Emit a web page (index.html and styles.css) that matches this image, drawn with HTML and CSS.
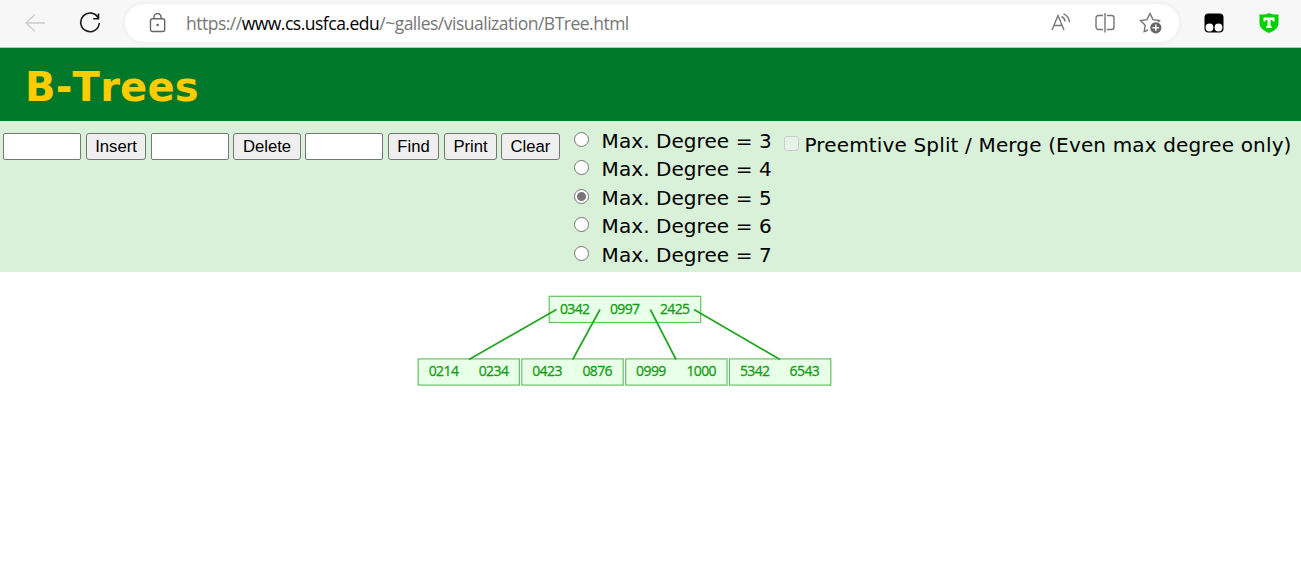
FILE: index.html
```html
<!DOCTYPE html>
<html lang="en">
<head>
<meta charset="utf-8">
<title>B-Tree Visualization</title>
<link rel="stylesheet" href="styles.css">
</head>
<body>
<nav class="toolbar">
  <svg class="back" width="22" height="20" viewBox="0 0 22 20"><path d="M11 1.500 2 10l9 8.500M2 10h19"/></svg>
  <svg class="reload" width="22" height="22" viewBox="0 0 22 22"><path d="M19.400 6.300A9.300 9.300 0 1 0 20.300 11M19.500 1.500v5.300h-5.300"/></svg>
  <div class="address">
    <svg class="lock" width="17" height="20" viewBox="0 0 17 20"><rect x="1.500" y="5.700" width="14.200" height="12.800" rx="2"/><path d="M5 5.700V4a3.500 3.500 0 0 1 7 0v1.700"/><circle class="dot" cx="8.600" cy="12" r="1.300"/></svg>
    <span class="url">https://<b>www.cs.usfca.edu</b>/~galles/visualization/BTree.html</span>
    <span class="tools">
      <svg width="20" height="20" viewBox="0 0 20 20"><path d="M1 17 7 2.500 13 17M3 12.500h8M10.500 3.500a6 6 0 0 1 3.500 5M12.500 .8a10 10 0 0 1 6 8.500"/></svg>
      <svg width="20" height="20" viewBox="0 0 20 20"><path d="M8 2.500H3.500a2.500 2.500 0 0 0-2.500 2.500v9a2.500 2.500 0 0 0 2.500 2.500H8M12 2.500h4.500a2.500 2.500 0 0 1 2.500 2.500v9a2.500 2.500 0 0 1-2.500 2.500H12M10 0v19.500"/></svg>
      <svg width="23" height="22" viewBox="0 0 23 22"><path d="M9 18 5.200 19.700 6.200 13.200 1.500 8.600l6.500-1L11 1.500l3 6.100 6.500 1-1.500 1.700"/><circle class="badge" cx="16.800" cy="15.800" r="5.600"/><path class="plus" d="M13.500 15.800h6.600M16.800 12.500v6.600"/></svg>
    </span>
  </div>
  <svg class="monkey" width="20" height="20" viewBox="0 0 20 20"><rect x=".5" y=".5" width="19" height="19" rx="4"/><circle cx="5.500" cy="14.500" r="3.900"/><circle cx="14.500" cy="14.500" r="3.900"/></svg>
  <svg class="shield" width="20" height="20" viewBox="0 0 20 20"><path class="body" d="M10 0c2.500 1.500 5.500 1.800 9.500 1.400V10c0 5-4.500 8-9.500 10C5 18 .5 15 .5 10V1.400C4.500 1.800 7.500 1.500 10 0z"/><path class="mark" d="M4.500 4.500h11v4h-1.700L13.300 7h-1.800v6l1.300.5V15H7.200v-1.500l1.300-.5V7H6.700l-.5 1.500H4.500z"/></svg>
</nav>
<header class="heading"><h1>B-Trees</h1></header>
<main>
  <section class="controls">
    <div class="actions">
      <input class="field" type="text"><button class="insert">Insert</button>
      <input class="field" type="text"><button class="delete">Delete</button>
      <input class="field" type="text"><button class="find">Find</button>
      <button class="print">Print</button><button class="clear">Clear</button>
    </div>
    <div class="degrees">
      <label><input type="radio" name="degree"><span>Max. Degree = 3</span></label>
      <label><input type="radio" name="degree"><span>Max. Degree = 4</span></label>
      <label><input type="radio" name="degree" checked><span>Max. Degree = 5</span></label>
      <label><input type="radio" name="degree"><span>Max. Degree = 6</span></label>
      <label><input type="radio" name="degree"><span>Max. Degree = 7</span></label>
    </div>
    <label class="preemptive"><input type="checkbox" disabled><span>Preemtive Split / Merge (Even max degree only)</span></label>
  </section>
  <svg class="tree" width="1301" height="299" viewBox="0 272 1301 299">
    <g class="node">
      <rect x="549.200" y="296.300" width="151.500" height="26.200"/>
      <rect x="418.200" y="358.900" width="101.200" height="26.200"/>
      <rect x="521.800" y="358.900" width="101.400" height="26.200"/>
      <rect x="625.700" y="358.900" width="101.300" height="26.200"/>
      <rect x="729.400" y="358.900" width="101.400" height="26.200"/>
    </g>
    <path class="edges" d="M556.500 309.500 469 359.500M600 309.500 572.700 359.500M650.300 309.500 676 359.500M694 309.500 780 359.500"/>
    <g class="keys">
      <text x="574.700" y="313.600">0342</text><text x="624.700" y="313.600">0997</text><text x="674.700" y="313.600">2425</text>
      <text x="443.500" y="376">0214</text><text x="493.500" y="376">0234</text>
      <text x="547" y="376">0423</text><text x="597.200" y="376">0876</text>
      <text x="650.900" y="376">0999</text><text x="701.200" y="376">1000</text>
      <text x="754.700" y="376">5342</text><text x="804.400" y="376">6543</text>
    </g>
  </svg>
</main>
</body>
</html>
```
FILE: styles.css
```css
* { box-sizing: border-box; }
body { margin: 0; background: #fff; color: #000; font-family: "DejaVu Sans", sans-serif; overflow: hidden; }
svg { display: block; flex: none; fill: none; }

.toolbar { display: flex; align-items: center; height: 48px; padding: 0 22px 2px 24px; background: #f7f7f7; border-bottom: 1px solid #b9c4bc; }
.back { stroke: #ccc; stroke-width: 1.3; margin-right: 33px; }
.reload { stroke: #1b1b1b; stroke-width: 1.6; margin-right: 24px; }
.address { display: flex; align-items: center; width: 1054px; height: 38px; padding: 0 17px 0 24px; border-radius: 19px; background: #fff; box-shadow: 0 0 4px #e8e8e8; }
.lock { stroke: #666; stroke-width: 1.4; margin-right: 20px; }
.lock .dot { fill: #666; stroke: none; }
.url { font: 17.5px/24px "Open Sans", sans-serif; letter-spacing: -.5px; color: #767676; white-space: nowrap; }
.url b { font-weight: 400; color: #000; }
.tools { display: flex; align-items: center; gap: 24px; margin-left: auto; stroke: #767676; stroke-width: 1.4; }
.badge { fill: #666; stroke: none; }
.plus { stroke: #fff; }
.monkey { margin: 0 35px 0 25px; fill: #000; }
.monkey circle { fill: #fff; }
.shield .body { fill: #00d000; }
.shield .mark { fill: #fff; }

.heading { height: 73px; padding: 15px 25px; background: #007829; }
.heading h1 { margin: 0; font-size: 40px; line-height: 48px; font-kerning: none; letter-spacing: .25px; color: #fc0; }

.controls { display: flex; align-items: flex-start; height: 151px; background: #d9f0d9; padding-left: 3px; }
.actions { display: flex; flex: none; width: 557px; margin: 12px 14px 0 0; }
.field { width: 78px; height: 27px; margin-right: 5px; border: 1px solid #767676; border-radius: 2px; background: #fff; }
button { height: 27px; padding: 0; margin-right: 5px; border: 1px solid #767676; border-radius: 3px; background: #efefef; color: #000; font: 16.67px/24px "Liberation Sans", Arial, sans-serif; }
.insert { width: 60px; }
.delete, .field:nth-of-type(2) { margin-right: 4px; }
.delete { width: 68px; }
.find { width: 51px; }
.print { width: 53px; margin-right: 4px; }
.clear { width: 59px; margin-right: 0; }
.degrees { flex: none; width: 210px; padding-top: 5.500px; font-size: 20px; letter-spacing: .070px; }
.degrees label { display: flex; align-items: flex-start; height: 28.500px; line-height: 28.500px; white-space: nowrap; }
.degrees input { appearance: none; flex: none; width: 15px; height: 15px; margin: 5px 12.600px 0 0; border: 1px solid #767676; border-radius: 50%; background: #fff; }
.degrees input:checked { background: radial-gradient(circle, #767676 4px, #fff 5px); }
.preemptive { display: flex; align-items: flex-start; padding-top: 10px; line-height: 28px; font-size: 20px; letter-spacing: .150px; white-space: nowrap; }
.preemptive input { appearance: none; width: 15px; height: 15px; margin: 5px 5.500px 0 0; border: 1px solid #c8cec8; border-radius: 3px; background: #e8f2e8; }

.node rect { fill: #e8ffe8; stroke: #66c266; stroke-width: 1.200; }
.edges { stroke: #22a522; stroke-width: 1.700; }
.keys { fill: #149c14; stroke: #149c14; stroke-width: .3; font: 14px "Open Sans", sans-serif; letter-spacing: -.6px; text-anchor: middle; }
```
